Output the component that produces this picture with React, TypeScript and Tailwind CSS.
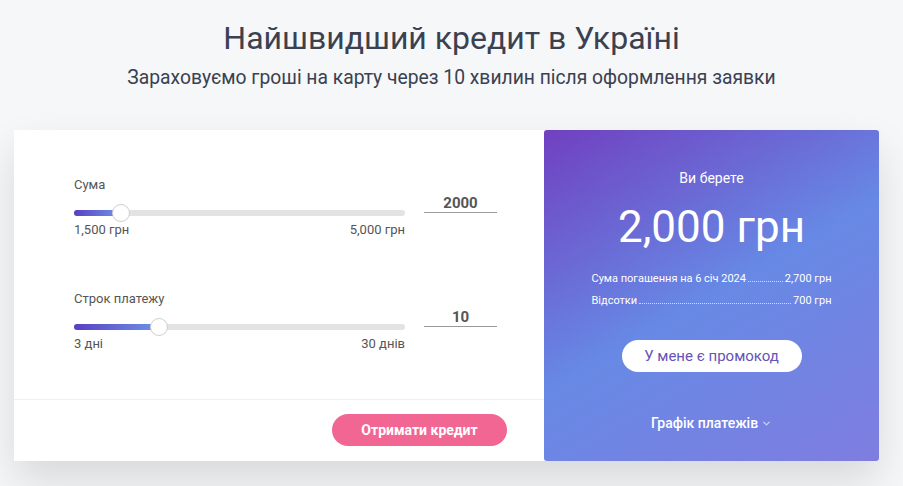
import { ChevronDown } from "lucide-react";

function Slider({ label, pct, min, max, value }: { label: string; pct: number; min: string; max: string; value: string }) {
  return (
    <div className="flex items-start">
      <div className="w-[331px]">
        <div className="text-[13px] leading-4 text-[#555]">{label}</div>
        <div className="relative mt-[17px] h-[6px] rounded-full bg-[#e3e3e3]">
          <div className="absolute left-0 top-0 h-[6px] rounded-full bg-gradient-to-r from-[#5a3ec2] to-[#6d93e8]" style={{ width: `${pct}px` }} />
          <div className="absolute top-[-6px] h-[18px] w-[18px] rounded-full border border-[#cfcfcf] bg-white" style={{ left: `${pct - 9}px` }} />
        </div>
        <div className="mt-[6px] flex justify-between text-[13px] leading-4 text-[#555]">
          <span>{min}</span>
          <span>{max}</span>
        </div>
      </div>
      <div className="ml-[19px] mt-[18px] w-[73px] border-b border-[#9a9a9a] text-center text-[15px] font-bold leading-[17px] text-[#555]">{value}</div>
    </div>
  );
}

export default function App() {
  return (
    <div className="min-h-[486px] bg-[#f6f7f9] font-['Roboto',sans-serif]">
      <div className="pt-[20px] text-center">
        <h1 className="text-[32px] leading-9 text-[#3a4150]">Найшвидший кредит в Україні</h1>
        <p className="mt-[10px] text-[19.3px] leading-6 text-[#3a4150]">Зараховуємо гроші на карту через 10 хвилин після оформлення заявки</p>
      </div>
      <div className="mt-[40px] ml-[14px] flex w-[865px] shadow-[0_20px_40px_rgba(0,0,0,0.12)]">
        <div className="flex w-[530px] flex-col bg-white">
          <div className="flex flex-col gap-[53px] pl-[60px] pt-[47px]">
            <Slider label="Сума" pct={47} min="1,500 грн" max="5,000 грн" value="2000" />
            <Slider label="Строк платежу" pct={85} min="3 дні" max="30 днів" value="10" />
          </div>
          <div className="mt-[47px] flex justify-end border-t border-[#f0f0f0] pr-[37px] pt-[14px] pb-[15px]">
            <button type="button" className="h-[32px] w-[175px] rounded-full bg-[#f26694] text-[14px] font-bold text-white">Отримати кредит</button>
          </div>
        </div>
        <div className="flex w-[335px] flex-col items-center rounded-[3px] bg-[linear-gradient(150deg,#7040c0_0%,#6789e5_50%,#7f7de0_100%)] pt-[40px] text-white">
          <div className="text-[14px] leading-4">Ви берете</div>
          <div className="mt-[16px] text-[44px] leading-[50px]">2,000 грн</div>
          <div className="mt-[20px] flex w-[240px] flex-col gap-[9px] text-[11px] leading-[13px]">
            <div className="flex items-end">
              <span>Сума погашення на 6 січ 2024</span>
              <span className="mx-[2px] mb-[3px] flex-1 border-b border-dotted border-white/70" />
              <span>2,700 грн</span>
            </div>
            <div className="flex items-end">
              <span>Відсотки</span>
              <span className="mx-[2px] mb-[3px] flex-1 border-b border-dotted border-white/70" />
              <span>700 грн</span>
            </div>
          </div>
          <button type="button" className="mt-[33px] h-[32px] w-[180px] rounded-full bg-white text-[15px] text-[#6553b8]">У мене є промокод</button>
          <div className="mt-[41px] flex items-center gap-[3px] text-[14px] font-medium">
            Графік платежів
            <ChevronDown size={11} strokeWidth={3} className="text-white/60" />
          </div>
        </div>
      </div>
    </div>
  );
}
